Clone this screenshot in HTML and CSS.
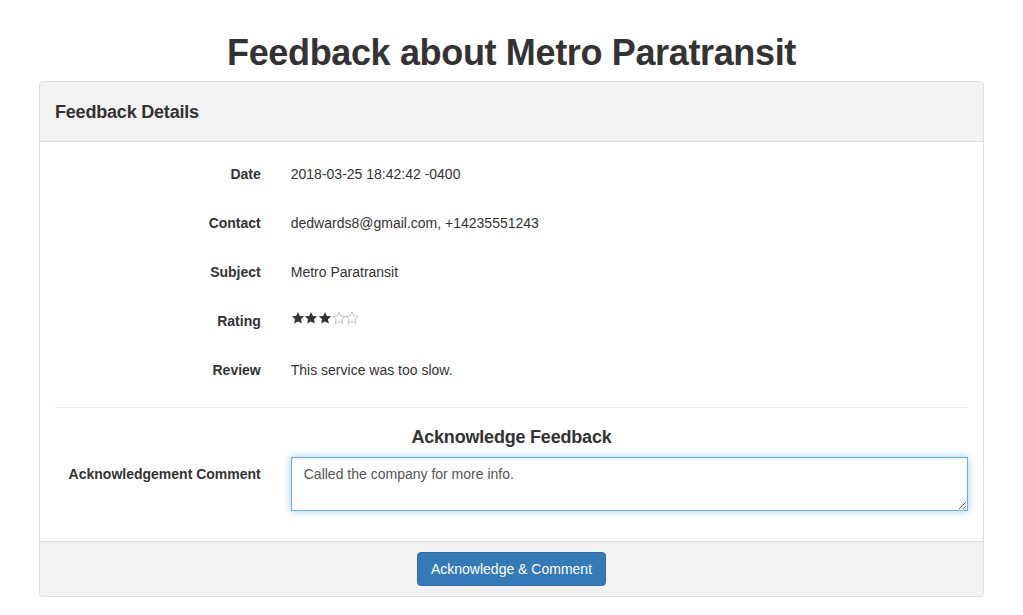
FILE: index.html
```html
<!DOCTYPE html>
<html lang="en">
<head>
<meta charset="utf-8">
<title>Feedback about Metro Paratransit</title>
<link rel="stylesheet" href="styles.css">
</head>
<body>
<h1 class="page-title">Feedback about Metro Paratransit</h1>
<div class="panel">
  <div class="panel-heading">
    <h2 class="panel-title">Feedback Details</h2>
  </div>
  <div class="panel-body">
    <div class="form-group">
      <div class="control-label">Date</div>
      <div class="control-value"><p class="static">2018-03-25 18:42:42 -0400</p></div>
    </div>
    <div class="form-group">
      <div class="control-label">Contact</div>
      <div class="control-value"><p class="static">dedwards8@gmail.com, +14235551243</p></div>
    </div>
    <div class="form-group">
      <div class="control-label">Subject</div>
      <div class="control-value"><p class="static">Metro Paratransit</p></div>
    </div>
    <div class="form-group">
      <div class="control-label">Rating</div>
      <div class="control-value">
        <div class="static stars" aria-label="3 of 5 stars">
          <svg class="star on" viewBox="0 0 24 24"><polygon points="12,1.5 15.1,8.4 22.6,9.2 17,14.2 18.6,21.6 12,17.8 5.4,21.6 7,14.2 1.4,9.2 8.9,8.4"/></svg>
          <svg class="star on" viewBox="0 0 24 24"><polygon points="12,1.5 15.1,8.4 22.6,9.2 17,14.2 18.6,21.6 12,17.8 5.4,21.6 7,14.2 1.4,9.2 8.9,8.4"/></svg>
          <svg class="star on" viewBox="0 0 24 24"><polygon points="12,1.5 15.1,8.4 22.6,9.2 17,14.2 18.6,21.6 12,17.8 5.4,21.6 7,14.2 1.4,9.2 8.9,8.4"/></svg>
          <svg class="star off" viewBox="0 0 24 24"><polygon points="12,1.5 15.1,8.4 22.6,9.2 17,14.2 18.6,21.6 12,17.8 5.4,21.6 7,14.2 1.4,9.2 8.9,8.4"/></svg>
          <svg class="star off" viewBox="0 0 24 24"><polygon points="12,1.5 15.1,8.4 22.6,9.2 17,14.2 18.6,21.6 12,17.8 5.4,21.6 7,14.2 1.4,9.2 8.9,8.4"/></svg>
        </div>
      </div>
    </div>
    <div class="form-group">
      <div class="control-label">Review</div>
      <div class="control-value"><p class="static">This service was too slow.</p></div>
    </div>
    <hr class="divider">
    <h3 class="section-title">Acknowledge Feedback</h3>
    <div class="form-group">
      <label class="control-label" for="comment">Acknowledgement Comment</label>
      <div class="control-value"><textarea id="comment" class="form-control" rows="2">Called the company for more info.</textarea></div>
    </div>
  </div>
  <div class="panel-footer">
    <button class="btn-primary" type="button">Acknowledge &amp; Comment</button>
  </div>
</div>
</body>
</html>
```

FILE: styles.css
```css
html, body {
  margin: 0;
  padding: 0;
  background: #fff;
}
body {
  font-family: "Liberation Sans", Arial, Helvetica, sans-serif;
  font-size: 14px;
  line-height: 20px;
  color: #333;
}
.page-title {
  text-align: center;
  font-size: 36px;
  font-weight: bold;
  line-height: 40px;
  letter-spacing: -0.35px;
  margin: 33px 0 8px;
  color: #333;
}
.panel {
  width: 945px;
  box-sizing: border-box;
  margin: 0 auto;
  border: 1px solid #ddd;
  border-radius: 4px;
  background: #fff;
  box-shadow: 0 1px 1px rgba(0,0,0,.05);
}
.panel-heading {
  background: #f2f2f2;
  border-bottom: 1px solid #ddd;
  border-radius: 3px 3px 0 0;
  padding: 20px 15px 19px;
}
.panel-title {
  margin: 0;
  font-size: 18px;
  line-height: 20px;
  font-weight: bold;
  letter-spacing: -0.2px;
  color: #333;
}
.panel-body {
  padding: 15px;
}
.form-group {
  display: flex;
  margin: 0 -15px 15px;
}
.control-label {
  flex: 0 0 25%;
  box-sizing: border-box;
  padding: 7px 15px 0;
  text-align: right;
  font-weight: bold;
}
.control-value {
  flex: 0 0 75%;
  box-sizing: border-box;
  padding: 0 15px;
}
.static {
  margin: 0;
  padding: 7px 0;
  min-height: 34px;
  box-sizing: border-box;
}
.stars {
  display: flex;
  align-items: flex-start;
  padding-top: 7px;
}
.star {
  width: 14px;
  height: 14px;
  margin-right: -0.4px;
  flex: 0 0 auto;
}
.star.on polygon {
  fill: #333;
}
.star.off polygon {
  fill: none;
  stroke: #b3b3b3;
  stroke-width: 1.4;
  stroke-linejoin: miter;
}
.divider {
  margin: 20px 0 19px;
  border: 0;
  border-top: 1px solid #eee;
  height: 0;
}
.section-title {
  margin: 10px 0;
  font-size: 18px;
  line-height: 20px;
  font-weight: bold;
  text-align: center;
  letter-spacing: -0.2px;
  color: #333;
}
.form-control {
  display: block;
  width: 100%;
  height: 54px;
  box-sizing: border-box;
  padding: 6px 12px;
  font-family: "Liberation Sans", Arial, sans-serif;
  font-size: 14px;
  line-height: 20px;
  color: #555;
  background: #fff;
  border: 1px solid #66afe9;
  border-radius: 0;
  outline: none;
  box-shadow: inset 0 1px 1px rgba(0,0,0,.075), 0 0 8px rgba(102,175,233,.6);
  margin: 0;
}
.panel-footer {
  background: #f2f2f2;
  border-top: 1px solid #ddd;
  border-radius: 0 0 3px 3px;
  padding: 10px 15px;
  text-align: center;
}
.btn-primary {
  display: inline-block;
  padding: 6px 13px;
  font-family: "Liberation Sans", Arial, sans-serif;
  font-size: 14px;
  line-height: 20px;
  color: #fff;
  background: #337ab7;
  border: 1px solid #2e6da4;
  border-radius: 4px;
  cursor: pointer;
  margin: 0;
}
```
